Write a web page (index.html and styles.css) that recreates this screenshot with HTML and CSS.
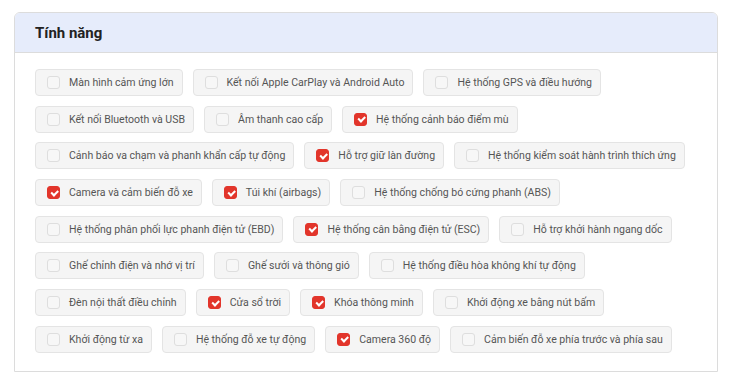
FILE: index.html
```html
<!DOCTYPE html>
<html lang="vi">
<head>
  <meta charset="UTF-8" />
  <meta name="viewport" content="width=device-width, initial-scale=1.0" />
  <title>Tính năng</title>
  <link rel="stylesheet" href="styles.css">
</head>
<body>
  <section class="card">
    <header class="card-header">
      <h2>Tính năng</h2>
    </header>
    <div class="card-body">
      <ul class="features">
        <li class="chip"><span class="box"></span>Màn hình cảm ứng lớn</li>
        <li class="chip"><span class="box"></span>Kết nối Apple CarPlay và Android Auto</li>
        <li class="chip"><span class="box"></span>Hệ thống GPS và điều hướng</li>
        <li class="chip"><span class="box"></span>Kết nối Bluetooth và USB</li>
        <li class="chip"><span class="box"></span>Âm thanh cao cấp</li>
        <li class="chip checked"><span class="box"></span>Hệ thống cảnh báo điểm mù</li>
        <li class="chip"><span class="box"></span>Cảnh báo va chạm và phanh khẩn cấp tự động</li>
        <li class="chip checked"><span class="box"></span>Hỗ trợ giữ làn đường</li>
        <li class="chip"><span class="box"></span>Hệ thống kiểm soát hành trình thích ứng</li>
        <li class="chip checked"><span class="box"></span>Camera và cảm biến đỗ xe</li>
        <li class="chip checked"><span class="box"></span>Túi khí (airbags)</li>
        <li class="chip"><span class="box"></span>Hệ thống chống bó cứng phanh (ABS)</li>
        <li class="chip"><span class="box"></span>Hệ thống phân phối lực phanh điện tử (EBD)</li>
        <li class="chip checked"><span class="box"></span>Hệ thống cân bằng điện tử (ESC)</li>
        <li class="chip"><span class="box"></span>Hỗ trợ khởi hành ngang dốc</li>
        <li class="chip"><span class="box"></span>Ghế chỉnh điện và nhớ vị trí</li>
        <li class="chip"><span class="box"></span>Ghế sưởi và thông gió</li>
        <li class="chip"><span class="box"></span>Hệ thống điều hòa không khí tự động</li>
        <li class="chip"><span class="box"></span>Đèn nội thất điều chỉnh</li>
        <li class="chip checked"><span class="box"></span>Cửa sổ trời</li>
        <li class="chip checked"><span class="box"></span>Khóa thông minh</li>
        <li class="chip"><span class="box"></span>Khởi động xe bằng nút bấm</li>
        <li class="chip"><span class="box"></span>Khởi động từ xa</li>
        <li class="chip"><span class="box"></span>Hệ thống đỗ xe tự động</li>
        <li class="chip checked"><span class="box"></span>Camera 360 độ</li>
        <li class="chip"><span class="box"></span>Cảm biến đỗ xe phía trước và phía sau</li>
      </ul>
    </div>
  </section>
</body>
</html>
```

FILE: styles.css
```css
* {
  margin: 0;
  padding: 0;
  box-sizing: border-box;
}

body {
  font-family: Roboto, "Liberation Sans", sans-serif;
  background: #fff;
  padding: 12px 14px 0 14px;
}

.card {
  width: 704px;
  border: 1px solid #dcdcdc;
  border-radius: 6px 6px 0 0;
  background: #fff;
}

.card-header {
  background: #e6ecfb;
  border-bottom: 1px solid #dcdcdc;
  border-radius: 5px 5px 0 0;
  height: 40px;
  display: flex;
  align-items: center;
  padding: 0 20px;
}

.card-header h2 {
  font-size: 15px;
  font-weight: 700;
  color: #222;
}

.card-body {
  padding: 16px 20px 18px 20px;
}

.features {
  list-style: none;
  display: flex;
  flex-wrap: wrap;
  gap: 9.7px 10px;
}

.chip {
  display: flex;
  align-items: center;
  gap: 9px;
  height: 27px;
  padding: 0 8px 0 11px;
  background: #f5f5f5;
  border: 1px solid #e4e4e4;
  border-radius: 4px;
  font-size: 10.55px;
  color: #555;
  white-space: nowrap;
}

.box {
  width: 13px;
  height: 13px;
  border: 1px solid #dedede;
  border-radius: 3px;
  background: #f7f7f7;
  flex-shrink: 0;
  position: relative;
}

.checked .box {
  background: #e2352b;
  border-color: #e2352b;
}

.checked .box::after {
  content: '';
  position: absolute;
  left: 3px;
  top: 2.5px;
  width: 5px;
  height: 2.5px;
  border-left: 2px solid #fff;
  border-bottom: 2px solid #fff;
  transform: rotate(-45deg);
}
```
